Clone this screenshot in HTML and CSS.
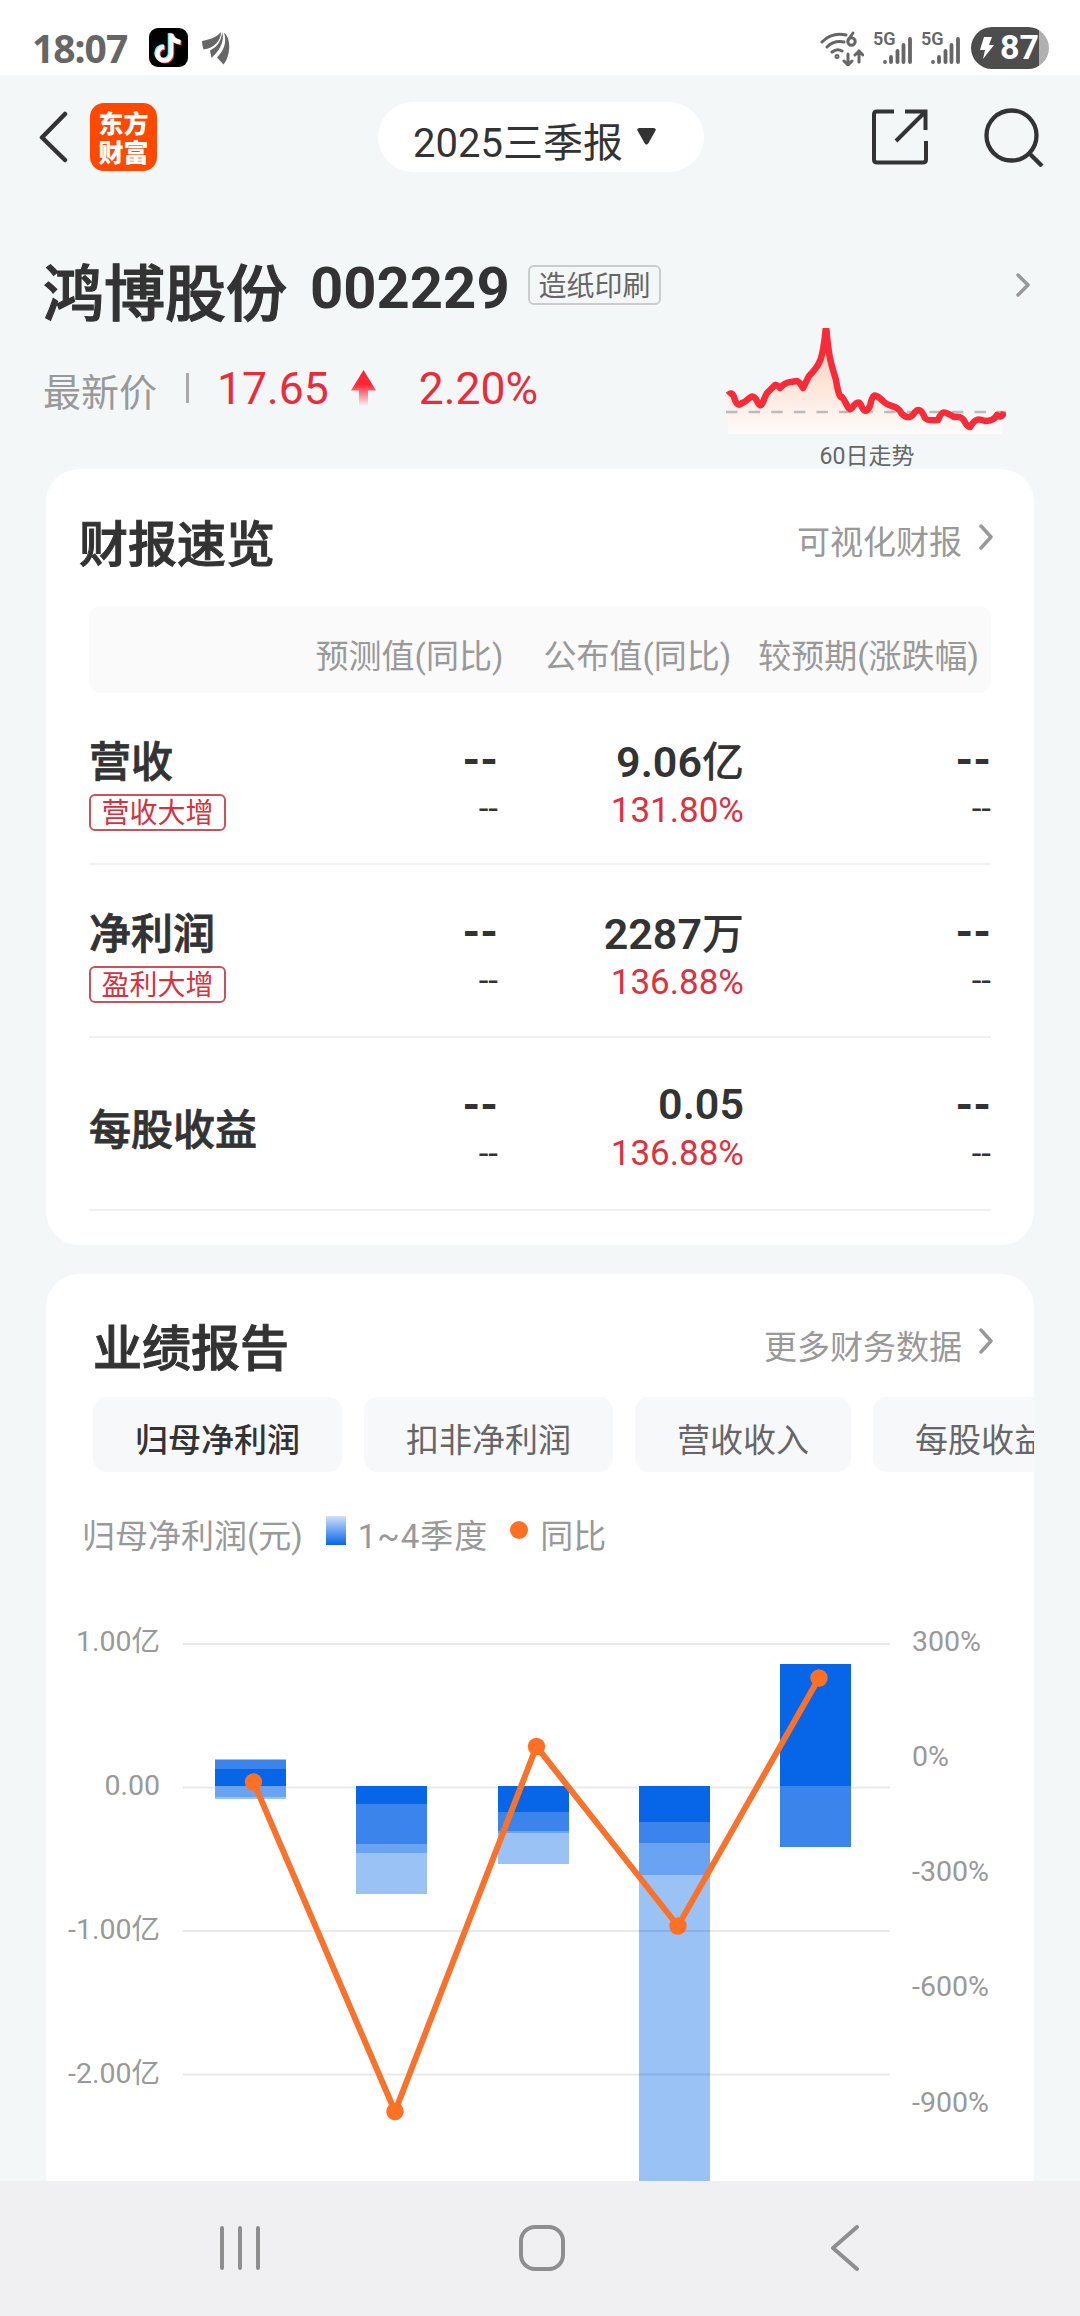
FILE: index.html
```
<!DOCTYPE html>
<html lang="zh-CN">
  <head>
    <meta charset="utf-8">
    <title>财报速览</title>
    <link rel="stylesheet" href="styles.css">
  </head>
  <body>
    <div class="status-bar">
      <span class="time">18:07</span>
      <svg class="app-icon" width="39" height="39" viewBox="0 0 39 39">
        <rect width="39" height="39" rx="9" fill="#000"/>
        <g fill="none" stroke-width="4.6">
          <path d="M21 5V25a6.800 6.800 0 1 1-6.800-6.800M21 5.500c1 4.500 4 7.500 9.500 8" stroke="#25f4ee"/>
          <path d="M23 6.500V26.500a6.800 6.800 0 1 1-6.800-6.800M23 7c1 4.500 4 7.500 9.500 8" stroke="#fe2c55"/>
          <path d="M22 5.700V25.700a6.800 6.800 0 1 1-6.800-6.800M22 6.200c1 4.500 4 7.500 9.500 8" stroke="#fff"/>
        </g>
      </svg>
      <svg class="leaf-icon" width="28" height="34" viewBox="0 0 28 34" fill="#666">
        <path d="M0 10C7 8.500 14 7 19 1C19 10 12 17 1.500 18.500Q0 14 0 10z"/>
        <path d="M20.300 1C23 12 16 21 9.500 27L8 19.500C15 16 19 11 20.300 1z"/>
        <path d="M22 1.500C30 8 28 26 21.500 33.500L15 26.500C22 20 25 11 22 1.500z"/>
      </svg>
      <div class="status-right">
        <svg width="44" height="36" viewBox="0 0 44 36" fill="none" stroke="#666" stroke-width="3" stroke-linecap="round">
          <path d="M2 12Q12 2 26 5M7 17Q14 10 24 12M12 22Q17 18 22 21M28 24v10M24 31l4 4 4-4M39 32V21M35 25l4-4 4 4"/>
          <circle cx="17" cy="26.500" r="1" />
          <circle cx="31.500" cy="11.500" r="3.700"/>
          <path d="M28.500 9.500L33 3"/>
        </svg>
        <div class="signal">
          <span>5G</span>
          <svg width="30" height="30" viewBox="0 0 30 30" stroke="#666" stroke-width="3.800" stroke-linecap="round"><path d="M3 27v.1M9 22v5M15.500 16v11M21.500 10v17M28 4v23"/></svg>
        </div>
        <div class="signal">
          <span>5G</span>
          <svg width="30" height="30" viewBox="0 0 30 30" stroke="#666" stroke-width="3.800" stroke-linecap="round"><path d="M3 27v.1M9 22v5M15.500 16v11M21.500 10v17M28 4v23"/></svg>
        </div>
        <div class="battery">
          <svg width="14" height="22" viewBox="0 0 14 22" fill="#fff"><path d="M4 0h8l-3 8h5L3 22l2-9H0z"/></svg>
          <span>87</span>
        </div>
      </div>
    </div>

    <header class="nav">
      <svg class="back" width="30" height="52" viewBox="0 0 30 52" fill="none" stroke="#333" stroke-width="4.500" stroke-linecap="round" stroke-linejoin="round"><path d="M26 3L3 26.500L26 49"/></svg>
      <div class="logo">
        <span>东方</span>
        <span>财富</span>
      </div>
      <div class="period">
        <span>2025三季报</span>
        <svg width="19" height="17" viewBox="0 0 19 17" fill="#333"><path d="M2 0h15q3 1 1 3.500L11.500 15q-2 3-4 0L1 3.500Q-1 1 2 0z"/></svg>
      </div>
      <svg class="share" width="56" height="56" viewBox="0 0 56 56" fill="none" stroke="#333" stroke-width="4">
        <path d="M22 2.500H5q-3 0-3 3v45q0 3 3 3h46q3 0 3-3V32M33 2.500h20.500V21M52 4L24 32"/>
      </svg>
      <svg class="search" width="60" height="60" viewBox="0 0 60 60" fill="none" stroke="#333" stroke-width="4.300">
        <circle cx="27.500" cy="28.500" r="25"/>
        <path d="M45 46l13 13"/>
      </svg>
    </header>

    <section class="stock">
      <div class="stock-info">
        <div class="stock-name">
          <h1>鸿博股份</h1>
          <b>002229</b>
          <span class="industry">造纸印刷</span>
        </div>
        <div class="price-row">
          <span class="label">最新价</span>
          <i class="sep"></i>
          <span class="red">17.65</span>
          <svg width="25" height="36" viewBox="0 0 25 36">
            <defs>
              <linearGradient id="arrow" x1="0" y1="0" x2="0" y2="1">
                <stop offset=".4" stop-color="#ff2436"/>
                <stop offset="1" stop-color="#ff2436" stop-opacity="0"/>
              </linearGradient>
            </defs>
            <path d="M12.500 0L25 20.500H17V36H8V20.500H0z" fill="url(#arrow)"/>
          </svg>
          <span class="red">2.20%</span>
        </div>
      </div>
      <div class="trend">
        <svg class="chevron" width="14" height="24" viewBox="0 0 14 24"><path d="M2 2l10 10L2 22"/></svg>
        <svg class="spark" width="280" height="107" viewBox="0 0 280 107">
          <defs>
            <linearGradient id="area" x1="0" y1="0" x2="0" y2="1">
              <stop offset="0" stop-color="#ffc9b0"/>
              <stop offset="1" stop-color="#fefcfc"/>
            </linearGradient>
          </defs>
          <path d="M2 67L6 66L13 76L26 67L35 78L43 64L50 57L54 60L60 55L72 53L77 60L83 48L92 38Q98 27 100 0Q102 25 106 40L115 70L125 82L132 74L139 83L148 66L171 80L181 88L190 81L203 93L217 84L232 91L240 99L250 91L262 93L276 86V106H2z" fill="url(#area)"/>
          <path d="M0 84H280" stroke="#bbb" stroke-width="2.500" stroke-dasharray="11.500 11.100"/>
          <path d="M2 67Q6 63 8 69Q11 80 16 75C22 74 26 62 31 73C36 84 37 71 41 65L48 58Q50 55 54 60C60 53 66 54 71 53Q73 53 77 60L83 48C94 37 97 32 100-2C103 30 104 32 110 52Q113 71 116 69C121 75 122 84 126 80Q132 71 135 77Q139 88 144 78C147 65 148 65 157 73C163 80 171 76 176 86Q184 93 189 84Q194 78 199 90Q201 93 212 92C216 82 218 83 228 89C241 87 237 98 244 99C250 89 254 91 259 93Q268 93 271 87Q276 91 278 84" fill="none" stroke="#f92b38" stroke-width="6.500" stroke-linejoin="round"/>
        </svg>
        <span class="trend-label">60日走势</span>
      </div>
    </section>

    <section class="card overview">
      <div class="card-head">
        <h2>财报速览</h2>
        <a>可视化财报</a>
        <svg class="chevron" width="14" height="26" viewBox="0 0 14 26"><path d="M2 2l10 11L2 24"/></svg>
      </div>
      <div class="table">
        <div class="thead">
          <span>预测值(同比)</span>
          <span>公布值(同比)</span>
          <span>较预期(涨跌幅)</span>
        </div>
        <div class="row">
          <div class="name"><b>营收</b><span class="tag">营收大增</span></div>
          <div class="cell dash"><b>--</b><span>--</span></div>
          <div class="cell"><b>9.06<em>亿</em></b><span class="up">131.80%</span></div>
          <div class="cell dash"><b>--</b><span>--</span></div>
        </div>
        <div class="row">
          <div class="name"><b>净利润</b><span class="tag">盈利大增</span></div>
          <div class="cell dash"><b>--</b><span>--</span></div>
          <div class="cell"><b>2287<em>万</em></b><span class="up">136.88%</span></div>
          <div class="cell dash"><b>--</b><span>--</span></div>
        </div>
        <div class="row eps">
          <div class="name"><b>每股收益</b></div>
          <div class="cell dash"><b>--</b><span>--</span></div>
          <div class="cell"><b>0.05</b><span class="up">136.88%</span></div>
          <div class="cell dash"><b>--</b><span>--</span></div>
        </div>
      </div>
    </section>

    <section class="card report">
      <div class="card-head">
        <h2>业绩报告</h2>
        <a>更多财务数据</a>
        <svg class="chevron" width="14" height="26" viewBox="0 0 14 26"><path d="M2 2l10 11L2 24"/></svg>
      </div>
      <div class="tabs">
        <span class="tab active">归母净利润</span>
        <span class="tab">扣非净利润</span>
        <span class="tab">营收收入</span>
        <span class="tab">每股收益</span>
      </div>
      <div class="legend">
        <span>归母净利润(元)</span>
        <i class="swatch"></i>
        <span class="quarters">1~4季度</span>
        <i class="dot"></i>
        <span>同比</span>
      </div>
      <svg class="chart" width="988" height="601" viewBox="46 1580 988 601">
        <g class="grid">
          <path d="M183 1644H890M183 1787.500H890M183 1931H890M183 2074.500H890"/>
        </g>
        <g class="q1">
          <rect x="215" y="1769" width="71" height="17"/>
          <rect x="356" y="1786" width="71" height="18"/>
          <rect x="498" y="1786" width="71" height="26"/>
          <rect x="639" y="1786" width="71" height="36"/>
          <rect x="780" y="1664" width="71" height="122"/>
        </g>
        <g class="q2">
          <rect x="215" y="1759.500" width="71" height="9.500"/>
          <rect x="356" y="1804" width="71" height="40"/>
          <rect x="498" y="1812" width="71" height="19"/>
          <rect x="639" y="1822" width="71" height="21"/>
          <rect x="780" y="1786" width="71" height="61"/>
        </g>
        <g class="q3">
          <rect x="215" y="1786" width="71" height="11"/>
          <rect x="356" y="1844" width="71" height="9"/>
          <rect x="498" y="1831" width="71" height="2"/>
          <rect x="639" y="1843" width="71" height="32"/>
        </g>
        <g class="q4">
          <rect x="215" y="1797" width="71" height="2"/>
          <rect x="356" y="1853" width="71" height="41"/>
          <rect x="498" y="1833" width="71" height="31"/>
          <rect x="639" y="1875" width="71" height="306"/>
        </g>
        <path d="M639 1931h71M639 2074.500h71" stroke="#86b0e8" stroke-width="2"/>
        <g class="yoy">
          <polyline points="253.500,1782 395,2111.500 536.500,1746.500 678,1926 819,1678"/>
          <circle cx="253.500" cy="1782" r="8.700"/>
          <circle cx="395" cy="2111.500" r="8.700"/>
          <circle cx="536.500" cy="1746.500" r="8.700"/>
          <circle cx="678" cy="1926" r="8.700"/>
          <circle cx="819" cy="1678" r="8.700"/>
        </g>
        <g class="axis left">
          <text x="160" y="1651">1.00亿</text>
          <text x="160" y="1795">0.00</text>
          <text x="160" y="1939">-1.00亿</text>
          <text x="160" y="2083">-2.00亿</text>
        </g>
        <g class="axis">
          <text x="912" y="1651">300%</text>
          <text x="912" y="1766">0%</text>
          <text x="912" y="1881">-300%</text>
          <text x="912" y="1996">-600%</text>
          <text x="912" y="2112">-900%</text>
        </g>
      </svg>
    </section>

    <footer class="sys-nav">
      <svg width="42" height="46" viewBox="0 0 42 46"><path d="M3 3v40M21 3v40M39 3v40"/></svg>
      <svg class="home" width="46" height="46" viewBox="0 0 46 46"><rect x="2" y="2" width="42" height="42" rx="14"/></svg>
      <svg width="30" height="46" viewBox="0 0 30 46"><path d="M27 2L3 23l24 21"/></svg>
    </footer>
  </body>
</html>
```
FILE: styles.css
```
* {
  box-sizing: border-box;
}
body {
  margin: 0;
  width: 1080px;
  height: 2316px;
  overflow: hidden;
  display: flex;
  flex-direction: column;
  background: #f3f7f8;
  color: #333;
  font-family: Roboto, "Noto Sans CJK SC", sans-serif;
}
svg {
  display: block;
  flex-shrink: 0;
}
h1, h2 {
  margin: 0;
}
span, b, a {
  white-space: nowrap;
}

/* status bar */
.status-bar {
  height: 75px;
  flex-shrink: 0;
  background: #fff;
  display: flex;
  align-items: center;
  padding: 20px 31px 0 32px;
}
.time {
  width: 117px;
  font: 700 39px/40px "Noto Sans", sans-serif;
  letter-spacing: -1px;
  color: #666;
}
.leaf-icon {
  margin-left: 14px;
}
.status-right {
  margin-left: auto;
  display: flex;
  align-items: center;
}
.signal {
  display: flex;
  width: 38px;
  height: 34px;
  margin-left: 10px;
  position: relative;
  align-items: flex-end;
  justify-content: flex-end;
}
.signal span {
  position: absolute;
  left: -1px;
  top: -1px;
  font-size: 18px;
  line-height: 18px;
  font-weight: 600;
  color: #666;
}
.battery {
  width: 78px;
  height: 42px;
  margin-left: 11px;
  border-radius: 21px;
  background: linear-gradient(90deg, #4d4d4d 68px, #b0b0b0 68px);
  color: #fff;
  display: flex;
  align-items: center;
  gap: 6px;
  padding-left: 9px;
}
.battery span {
  font-size: 34px;
  line-height: 40px;
  margin-top: -2px;
  font-weight: 700;
}

/* top nav */
.nav {
  height: 125px;
  flex-shrink: 0;
  display: flex;
  align-items: center;
  padding: 0 36px 2px 39px;
}
.logo {
  width: 67px;
  height: 68px;
  margin-left: 21px;
  padding-top: 5px;
  border-radius: 14px;
  background: #ff4800;
  color: #fff;
  font: 900 25px/29px "Noto Sans CJK SC", sans-serif;
  display: flex;
  flex-direction: column;
  align-items: center;
}
.period {
  width: 326px;
  height: 70px;
  margin-left: 221px;
  border-radius: 35px;
  background: #fff;
  display: flex;
  align-items: center;
  padding-left: 35px;
  font-size: 40px;
}
.period span {
  width: 224px;
  padding-top: 7px;
}
.share {
  margin-left: 168px;
}
.search {
  margin-left: auto;
}

/* stock summary */
.stock {
  height: 269px;
  flex-shrink: 0;
  display: flex;
  justify-content: space-between;
  padding: 0 50px 0 43px;
}
.stock-name {
  display: flex;
  height: 100px;
  padding-top: 47px;
}
.stock-name h1 {
  font-size: 61px;
  line-height: 97px;
  font-weight: 500;
  width: 267px;
  -webkit-text-stroke: 1.2px #333;
}
.stock-name b {
  font-size: 58px;
  line-height: 82px;
  width: 218px;
}
.industry {
  width: 133px;
  height: 40px;
  margin-top: 18px;
  border: 2px solid #ccc;
  border-radius: 6px;
  text-align: center;
  font-size: 28px;
  line-height: 39px;
  color: #666;
}
.price-row {
  display: flex;
  align-items: center;
  height: 50px;
  margin-top: 63px;
  font-size: 44.500px;
}
.price-row .label {
  width: 143px;
  font-size: 38px;
  color: #999;
  padding-top: 3px;
}
.sep {
  width: 3px;
  height: 30px;
  background: #aaa;
}
.red {
  color: #ea2c3a;
}
.price-row .red {
  margin-left: 28px;
  padding-top: 2px;
}
.price-row svg {
  margin-left: 22px;
}
.price-row svg + .red {
  margin-left: 43px;
}
.chevron {
  fill: none;
  stroke: #999;
  stroke-width: 3.500;
  stroke-linecap: round;
  stroke-linejoin: round;
}
.trend {
  display: flex;
  flex-direction: column;
  width: 304px;
}
.trend .chevron {
  margin: 73px 0 31px auto;
}
.trend-label {
  width: 282px;
  text-align: center;
  margin-top: 4px;
  font-size: 23px;
  line-height: 36px;
  color: #666;
}

/* cards */
.card {
  margin: 0 46px;
  background: #fff;
  border-radius: 33px;
  flex-shrink: 0;
}
.card-head {
  display: flex;
  align-items: center;
  height: 137px;
  padding: 5px 41px 0 33px;
}
.card-head h2 {
  font-size: 49px;
  font-weight: 500;
  -webkit-text-stroke: 1px #333;
}
.card-head a {
  margin-left: auto;
  font-size: 33px;
  color: #999;
}
.card-head .chevron {
  margin: -7px 0 0 17px;
}
.overview {
  height: 776px;
}
.table {
  margin: 0 43px;
}
.thead {
  height: 87px;
  border-radius: 12px;
  background: #fafafa;
  color: #999;
  font-size: 33px;
  display: flex;
  align-items: center;
  justify-content: flex-end;
  padding: 8px 12px 0 0;
}
.thead span + span {
  margin-left: 40px;
}
.thead span + span + span {
  margin-left: 27px;
}
.row {
  height: 173px;
  display: grid;
  grid-template-columns: 160px 249px 246px 247px;
  border-bottom: 2px solid #f0f0f0;
}
.thead + .row {
  height: 172px;
}
.name {
  display: flex;
  flex-direction: column;
  align-items: flex-start;
  padding: 39px 0 0 0;
}
.name b {
  font-size: 42px;
  line-height: 62px;
  font-weight: 500;
  -webkit-text-stroke: 0.800px #333;
}
.tag {
  width: 137px;
  height: 37px;
  border: 2px solid #c9525c;
  border-radius: 6px;
  text-align: center;
  font-size: 28px;
  line-height: 35px;
  color: #d9303e;
}
.cell {
  display: flex;
  flex-direction: column;
  align-items: flex-end;
  padding-top: 39px;
}
.cell b {
  font-size: 43px;
  line-height: 60px;
  font-weight: 600;
}
.cell em {
  font-style: normal;
  font-weight: 500;
  font-size: 42px;
}
.cell span {
  font-size: 35px;
  line-height: 36px;
}
.cell .up {
  color: #e0303e;
}
.dash,
.eps .cell {
  padding-top: 35px;
}
.dash b,
.eps .cell b {
  line-height: 63px;
}
.dash b {
  font-weight: 700;
  font-size: 45px;
}
.eps .name {
  padding-top: 62px;
}

/* performance report */
.report {
  height: 907px;
  margin-top: 29px;
  border-radius: 33px 33px 0 0;
  overflow: hidden;
}
.report .card-head {
  height: 123px;
  padding: 18px 41px 0 47px;
}
.tabs {
  display: flex;
  gap: 22px;
  padding-left: 47px;
}
.tab {
  height: 75px;
  padding: 11px 42px 0;
  border-radius: 14px;
  background: #f7f8fa;
  font-size: 33px;
  line-height: 65px;
  color: #666;
}
.active {
  color: #333;
  font-weight: 500;
}
.legend {
  display: flex;
  height: 108px;
  padding: 39px 0 0 36px;
  font-size: 33px;
  line-height: 52px;
  color: #999;
}
.swatch {
  width: 20px;
  height: 29px;
  margin: 5px 12px 0 23px;
  background: linear-gradient(#cfe0fa, #0766e8);
}
.quarters {
  letter-spacing: 1px;
}
.dot {
  width: 18px;
  height: 18px;
  margin: 10px 12px 0 22px;
  border-radius: 50%;
  background: #ff7024;
}
.grid {
  stroke: #e9e9e9;
  stroke-width: 2.200;
}
.q1 { fill: #0766e8; }
.q2 { fill: #3a84ec; }
.q3 { fill: #6aa3f1; }
.q4 { fill: #9bc2f5; }
.yoy {
  fill: #ff7024;
}
.yoy polyline {
  fill: none;
  stroke: #f8722c;
  stroke-width: 6;
}
.axis {
  font-size: 28.500px;
  fill: #999;
}
.left {
  text-anchor: end;
}

/* system navigation */
.sys-nav {
  height: 135px;
  flex-shrink: 0;
  background: #f0f0f3;
  display: flex;
  align-items: center;
  padding: 0 220px 1px 219px;
}
.sys-nav svg {
  fill: none;
  stroke: #8e8e8e;
  stroke-width: 4;
  stroke-linecap: round;
  stroke-linejoin: round;
}
.sys-nav .home {
  margin: 0 auto 0 258px;
}
```
